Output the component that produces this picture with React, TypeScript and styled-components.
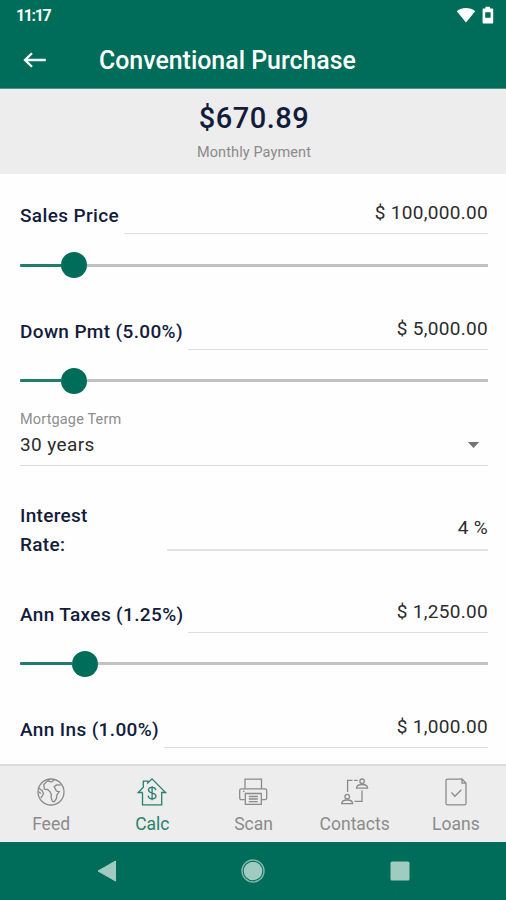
import React from "react";
import styled, { createGlobalStyle } from "styled-components";

const GREEN = "#006d5a";

const GlobalStyle = createGlobalStyle`
  * { box-sizing: border-box; }
  body { margin: 0; background: #fff; }
`;

const Screen = styled.div`
  width: 506px;
  height: 900px;
  display: flex;
  flex-direction: column;
  overflow: hidden;
  background: #fefefe;
  font-family: Roboto, "Liberation Sans", sans-serif;
  color: #141c3c;
`;

const StatusBar = styled.div`
  flex: none;
  height: 32px;
  padding: 0 12px 2px 16px;
  display: flex;
  align-items: center;
  justify-content: space-between;
  background: ${GREEN};
  color: #f2faf7;
  font-size: 16px;
  font-weight: 700;
`;

const Clock = styled.span`
  padding-top: 1px;
  letter-spacing: -1.4px;
`;

const StatusIcons = styled.div`
  display: flex;
  align-items: center;
  gap: 6px;
`;

const Toolbar = styled.header`
  flex: none;
  height: 57px;
  padding: 0 22px;
  display: flex;
  align-items: center;
  gap: 51px;
  background: ${GREEN};
  border-bottom: 1px solid #4d9384;
`;

const BackButton = styled.button`
  display: flex;
  padding: 0;
  border: 0;
  background: none;
`;

const Title = styled.h1`
  margin: 0;
  padding-top: 1px;
  color: #fff;
  font-size: 24.9px;
  font-weight: 500;
  line-height: 30px;
`;

const Summary = styled.section`
  flex: none;
  height: 85px;
  padding: 11px 0 0 2px;
  display: flex;
  flex-direction: column;
  align-items: center;
  background: #ededed;
  text-align: center;
`;

const Amount = styled.div`
  font-size: 29px;
  font-weight: 500;
  line-height: 36px;
  letter-spacing: 0.5px;
`;

const AmountCaption = styled.div`
  margin-top: 8px;
  color: #8a8a8a;
  font-size: 14.5px;
  line-height: 18px;
  letter-spacing: 0.1px;
`;

const Form = styled.main`
  flex: none;
  height: 590px;
  padding: 0 18px 0 20px;
  overflow: hidden;
`;

const SliderGroup = styled.div`
  height: 115.5px;
  padding-top: 18px;
`;

const FieldRow = styled.div`
  height: 42px;
  display: flex;
  align-items: stretch;
  gap: 5px;
`;

const FieldLabel = styled.label<{ $width?: number }>`
  flex: none;
  width: ${(p) => (p.$width ? `${p.$width}px` : "auto")};
  padding-top: 9px;
  font-size: 19px;
  font-weight: 500;
  line-height: 29px;
  letter-spacing: 0.36px;
  white-space: nowrap;
`;

const FieldValue = styled.div`
  flex: 1;
  padding-top: 6px;
  border-bottom: 1px solid #dedede;
  color: #2c2c2c;
  font-size: 19px;
  line-height: 29px;
  letter-spacing: 0.3px;
  text-align: right;
`;

const SliderTrack = styled.div`
  height: 26px;
  margin-top: 18px;
  display: flex;
  align-items: center;
`;

const Filled = styled.div<{ $width: number }>`
  width: ${(p) => p.$width}px;
  height: 3px;
  border-radius: 1px 0 0 1px;
  background: #1f7d68;
`;

const Thumb = styled.div`
  flex: none;
  width: 26px;
  height: 26px;
  border-radius: 50%;
  background: ${GREEN};
`;

const Remaining = styled.div`
  flex: 1;
  height: 3px;
  background: #c1c1c1;
`;

const SelectField = styled.div`
  height: 61px;
  padding-top: 6px;
  border-bottom: 1px solid #dadada;
`;

const SelectCaption = styled.div`
  color: #8d8d8d;
  font-size: 14.5px;
  line-height: 18px;
  letter-spacing: 0.15px;
`;

const SelectValue = styled.div`
  height: 31px;
  padding-right: 8px;
  display: flex;
  align-items: center;
  justify-content: space-between;
  color: #2c2c2c;
  font-size: 19px;
  letter-spacing: 0.4px;
`;

const RateRow = styled.div`
  height: 106.5px;
  padding-top: 35px;
  display: flex;
`;

const RateLabel = styled.label`
  width: 147px;
  font-size: 19px;
  font-weight: 500;
  line-height: 29px;
  letter-spacing: 0.3px;
`;

const RateValue = styled.div`
  flex: 1;
  height: 50px;
  padding-top: 12px;
  border-bottom: 2px solid #e2e2e2;
  color: #2c2c2c;
  font-size: 19px;
  line-height: 29px;
  letter-spacing: 0.3px;
  text-align: right;
`;

const TabBar = styled.nav`
  flex: none;
  height: 78px;
  display: grid;
  grid-template-columns: repeat(5, 1fr);
  background: #ededed;
  border-top: 2px solid #dcdcdc;
`;

const Tab = styled.button<{ $active?: boolean }>`
  padding: 10px 0 0 1px;
  border: 0;
  display: flex;
  flex-direction: column;
  align-items: center;
  background: none;
  color: ${(p) => (p.$active ? "#27806c" : "#8b8b8b")};
  font-family: inherit;
  font-size: 17.5px;
  line-height: 24px;
`;

const TabIcon = styled.svg`
  width: 32px;
  height: 32px;
  margin-bottom: 4px;
  fill: none;
  overflow: visible;
  stroke: currentColor;
  stroke-width: 1.3;
`;

const SystemNav = styled.div`
  flex: none;
  height: 58px;
  padding: 0 33px 0 34px;
  display: grid;
  grid-template-columns: repeat(3, 1fr);
  align-items: center;
  justify-items: center;
  background: ${GREEN};
`;

function FeedIcon() {
  return (
    <TabIcon viewBox="0 0 32 32">
      <circle cx="16" cy="16" r="13" />
      <path d="M15 3.4l-3 2-3.200 3.200.6 4.500 3.400.6 2.300 2.100 1.300 3.100-.4 2.400 1.500 4.200 1.700.2 2.300-3.300.3-3.200 2.500-3.500-2.800-.6-2.300-4.500 2.200-1.600 4.400-.2M19 3.800l-2 2.100-3.500-.6M3.500 12l3.700 2.600 1.300 3.200-2.600 4.400M3.300 15.600l2.600 2" />
    </TabIcon>
  );
}

function CalcIcon() {
  return (
    <TabIcon viewBox="0 0 32 32">
      <path d="M6.5 16.5v12.300h19.200V16.500h3.900L16 2.900 11.800 7V5.200H7.300v6L2.200 16.500h4.300" />
      <path d="M19.800 14.100c-.3-1.900-1.700-2.700-3.700-2.700-2.100 0-3.600.9-3.600 2.700 0 4.200 7.500 2 7.500 6 0 1.800-1.600 2.700-3.900 2.700-2.200 0-3.700-1-4-3.100M16.100 10v14.300" />
    </TabIcon>
  );
}

function ScanIcon() {
  return (
    <TabIcon viewBox="0 0 32 32">
      <path d="M8 13V3.200h16.500V13M7.800 23.700H4.300c-1 0-1.600-.7-1.600-1.600v-7.500c0-1 .7-1.700 1.600-1.700h23.800c1 0 1.600.7 1.600 1.700v7.500c0 .9-.7 1.600-1.600 1.600h-3.500" />
      <path d="M8.300 17.500h16v10.900h-16zM11.800 20.500h9M11.800 23h9M11.800 25.600h9M6 15.300h1.500" />
    </TabIcon>
  );
}

function ContactsIcon() {
  return (
    <TabIcon viewBox="0 0 32 32">
      <path d="M13.500 4.300H8.600v11.600M18.700 4.300h-3.500M23 14.500v10.800h-7.500" />
      <circle cx="23.100" cy="5.200" r="2.200" />
      <path d="M17.500 12.100c.1-2.400 2.100-3.600 5.600-3.600s5.400 1.200 5.500 3.600z" />
      <circle cx="8.200" cy="20.700" r="2.300" />
      <path d="M2.700 27.700c.1-2.500 2.100-3.700 5.500-3.700s5.400 1.200 5.500 3.700z" />
    </TabIcon>
  );
}

function LoansIcon() {
  return (
    <TabIcon viewBox="0 0 32 32">
      <path d="M22 3.100H7.500c-1 0-1.500.6-1.500 1.500v22.700c0 .9.6 1.500 1.500 1.500h17c1 0 1.500-.6 1.500-1.500V7.100L22 3.100v4h4" />
      <path d="M11.500 16.500l3.400 3.700 6.400-6.500" />
    </TabIcon>
  );
}

const tabs = [
  { label: "Feed", Icon: FeedIcon },
  { label: "Calc", Icon: CalcIcon, active: true },
  { label: "Scan", Icon: ScanIcon },
  { label: "Contacts", Icon: ContactsIcon },
  { label: "Loans", Icon: LoansIcon },
];

interface SliderFieldProps {
  label: string;
  value: string;
  filled: number;
  labelWidth: number;
}

function SliderField({ label, value, filled, labelWidth }: SliderFieldProps) {
  return (
    <SliderGroup>
      <FieldRow>
        <FieldLabel $width={labelWidth}>{label}</FieldLabel>
        <FieldValue>{value}</FieldValue>
      </FieldRow>
      <SliderTrack>
        <Filled $width={filled} />
        <Thumb />
        <Remaining />
      </SliderTrack>
    </SliderGroup>
  );
}

export default function App() {
  return (
    <>
      <GlobalStyle />
      <Screen>
        <StatusBar>
          <Clock>11:17</Clock>
          <StatusIcons>
            <svg width="20" height="16" viewBox="0 0 20 16">
              <path d="M.8 4.200C6-.2 14-.2 19.200 4.200L10 15.600z" fill="#fff" />
            </svg>
            <svg width="12" height="18" viewBox="0 0 12 18">
              <path
                d="M3.500.8h4.500v1.700h2.200c.6 0 1 .4 1 1v12.900c0 .6-.4 1-1 1H1.600c-.6 0-1-.4-1-1V3.500c0-.6.400-1 1-1h1.900zM3.200 6.200v5.600h5.400V6.200z"
                fill="#fff"
                fillRule="evenodd"
              />
            </svg>
          </StatusIcons>
        </StatusBar>
        <Toolbar>
          <BackButton aria-label="Back">
            <svg width="26" height="20" viewBox="0 0 26 20">
              <path
                d="M23.800 10H3M10 3.200L3 10l7 6.800"
                fill="none"
                stroke="#f4fbf9"
                strokeWidth="2.300"
              />
            </svg>
          </BackButton>
          <Title>Conventional Purchase</Title>
        </Toolbar>
        <Summary>
          <Amount>$670.89</Amount>
          <AmountCaption>Monthly Payment</AmountCaption>
        </Summary>
        <Form>
          <SliderField label="Sales Price" value="$ 100,000.00" filled={41} labelWidth={99} />
          <SliderField label="Down Pmt (5.00%)" value="$ 5,000.00" filled={41} labelWidth={163} />
          <SelectField>
            <SelectCaption>Mortgage Term</SelectCaption>
            <SelectValue>
              30 years
              <svg width="13" height="8" viewBox="0 0 13 8">
                <path d="M.8 1h11.400L6.500 7z" fill="#757575" />
              </svg>
            </SelectValue>
          </SelectField>
          <RateRow>
            <RateLabel>
              Interest
              <br />
              Rate:
            </RateLabel>
            <RateValue>4 %</RateValue>
          </RateRow>
          <SliderField label="Ann Taxes (1.25%)" value="$ 1,250.00" filled={52} labelWidth={163} />
          <SliderField label="Ann Ins (1.00%)" value="$ 1,000.00" filled={47} labelWidth={139} />
        </Form>
        <TabBar>
          {tabs.map(({ label, Icon, active }) => (
            <Tab key={label} $active={active}>
              <Icon />
              {label}
            </Tab>
          ))}
        </TabBar>
        <SystemNav>
          <svg width="20" height="22" viewBox="0 0 20 22">
            <path d="M18.500 1v20L1 11z" fill="#a0cbc1" stroke="#a0cbc1" strokeLinejoin="round" />
          </svg>
          <svg width="24" height="24" viewBox="0 0 24 24">
            <circle cx="12" cy="12" r="9.300" fill="#a0cbc1" />
            <circle cx="12" cy="12" r="11" fill="none" stroke="#82b6aa" strokeWidth="1.400" />
          </svg>
          <svg width="20" height="20" viewBox="0 0 20 20">
            <rect x=".5" y=".5" width="19" height="19" rx="1.500" fill="#a0cbc1" />
          </svg>
        </SystemNav>
      </Screen>
    </>
  );
}
